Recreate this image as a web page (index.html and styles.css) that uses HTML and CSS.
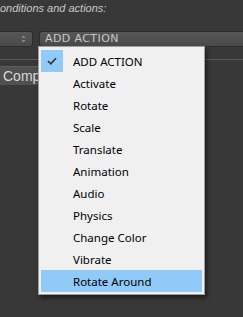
FILE: index.html
```html
<!DOCTYPE html>
<html lang="en">
<head>
    <meta charset="UTF-8">
    <title>Add Action</title>
    <link rel="stylesheet" href="styles.css">
</head>
<body>
    <div class="panel">
        <p class="caption">onditions and actions:</p>

        <div class="toolbar">
            <div class="select-small">
                <span class="spinner">
                    <svg width="5" height="8" viewBox="0 0 5 8">
                        <path d="M0.5 3 L2.5 0.5 L4.5 3 Z M0.5 5 L2.5 7.5 L4.5 5 Z" fill="#8a8a8a"/>
                    </svg>
                </span>
            </div>
            <div class="select-action">ADD ACTION</div>
        </div>

        <div class="separator"></div>

        <div class="tab">Comp</div>
    </div>

    <!-- open dropdown of the ADD ACTION select -->
    <ul class="menu">
        <li class="menu-item">
            <span class="check">
                <svg width="10" height="8" viewBox="0 0 10 8">
                    <path d="M1 4 L3.8 6.8 L9 1.2" fill="none" stroke="#333" stroke-width="1.6"/>
                </svg>
            </span>
            <span class="label">ADD ACTION</span>
        </li>
        <li class="menu-item"><span class="check"></span><span class="label">Activate</span></li>
        <li class="menu-item"><span class="check"></span><span class="label">Rotate</span></li>
        <li class="menu-item"><span class="check"></span><span class="label">Scale</span></li>
        <li class="menu-item"><span class="check"></span><span class="label">Translate</span></li>
        <li class="menu-item"><span class="check"></span><span class="label">Animation</span></li>
        <li class="menu-item"><span class="check"></span><span class="label">Audio</span></li>
        <li class="menu-item"><span class="check"></span><span class="label">Physics</span></li>
        <li class="menu-item"><span class="check"></span><span class="label">Change Color</span></li>
        <li class="menu-item"><span class="check"></span><span class="label">Vibrate</span></li>
        <li class="menu-item hover"><span class="check"></span><span class="label">Rotate Around</span></li>
    </ul>
</body>
</html>
```

FILE: styles.css
```css
/* Global Styles */
body {
    margin: 0;
    width: 243px;
    height: 317px;
    overflow: hidden;
    background-color: #383838;
    font-family: 'Noto Sans', 'DejaVu Sans', sans-serif;
    position: relative;
}

.panel {
    padding-top: 2px;
}

.caption {
    margin: 0;
    height: 14px;
    font-family: 'Liberation Sans', Arial, sans-serif;
    font-size: 11px;
    font-style: italic;
    color: #c8c8c8;
}

/* Toolbar with the two selects */
.toolbar {
    display: flex;
    gap: 6px;
    margin-top: 15px;
    height: 16px;
    margin-right: -6px;
}

.select-small,
.select-action {
    box-sizing: border-box;
    height: 16px;
    border: 1px solid #2c2c2c;
    border-radius: 3px;
    background: linear-gradient(#575757, #4a4a4a);
}

.select-small {
    width: 37px;
    margin-left: -4px;
    display: flex;
    align-items: center;
    justify-content: flex-end;
    padding-right: 6px;
}

.spinner {
    display: flex;
}

.select-action {
    flex: 1;
    padding-left: 5px;
    font-family: 'DejaVu Sans', Verdana, sans-serif;
    font-size: 11px;
    line-height: 14px;
    letter-spacing: 0.4px;
    color: #c8c8c8;
}

.separator {
    margin-top: 12px;
    height: 1px;
    background-color: #5a5a5a;
}

.tab {
    box-sizing: border-box;
    width: 40px;
    height: 19px;
    margin-top: 6px;
    padding-left: 3px;
    background-color: #505050;
    border-top: 1px solid #5c5c5c;
    color: #d8d8d8;
    font-family: 'Liberation Sans', Arial, sans-serif;
    font-size: 14px;
    line-height: 18px;
}

/* Dropdown menu */
.menu {
    position: absolute;
    left: 38px;
    top: 46px;
    width: 167px;
    box-sizing: border-box;
    margin: 0;
    padding: 3px 2px 2px 2px;
    list-style: none;
    background-color: #f0f0f0;
    border: 1px solid #a0a0a0;
    box-shadow: 2px 3px 4px rgba(0, 0, 0, 0.5);
}

.menu-item {
    display: flex;
    align-items: center;
    height: 22px;
    font-size: 11.5px;
    color: #000;
}

.check {
    width: 22px;
    height: 22px;
    display: flex;
    align-items: center;
    justify-content: center;
}

.menu-item:first-child .check {
    background-color: #91c9f7;
}

.label {
    padding-left: 10px;
}

.menu-item.hover {
    background-color: #91c9f7;
}
```
